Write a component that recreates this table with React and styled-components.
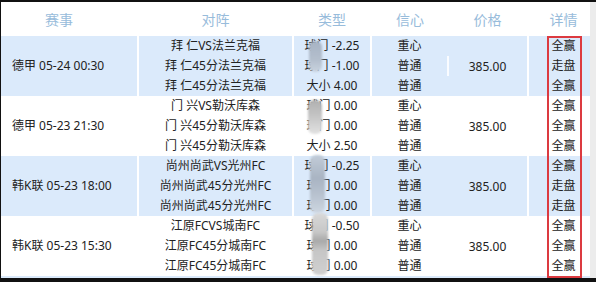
import React from 'react';
import styled, { createGlobalStyle } from 'styled-components';

const GlobalStyle = createGlobalStyle`
  html, body {
    margin: 0;
    padding: 0;
    background: #111;
  }
  body {
    font-family: "Noto Sans", "Noto Sans CJK SC", sans-serif;
    font-size: 12px;
    color: #222;
  }
`;

const Frame = styled.div`
  display: flex;
  width: 596px;
  height: 282px;
  padding: 2px 0 0 1px;
  box-sizing: border-box;
  background: #111;
  overflow: hidden;
`;

const Table = styled.div`
  position: relative;
  width: 589px;
  display: flex;
  flex-direction: column;
  background: #fff;
  align-self: flex-start;
`;

const RightEdge = styled.div`
  flex: 1;
  height: 276px;
  background: #ececec;
`;

const Row = styled.div`
  display: grid;
  grid-template-columns: 136px 153px 76px 155px 1fr;
  column-gap: 2px;
  height: ${p => p.$height}px;
  background: #fff;
`;

const HeadCell = styled.div`
  display: flex;
  align-items: center;
  justify-content: center;
  font-size: 14px;
  color: #98bcdb;
  padding: ${p => p.$pad || '0'};
`;

const Cell = styled.div`
  position: relative;
  display: flex;
  flex-direction: column;
  justify-content: center;
  align-items: ${p => (p.$left ? 'flex-start' : 'center')};
  padding-left: ${p => p.$padLeft || 0}px;
  background: ${p => (p.$alt ? '#dbeafb' : '#fff')};
  line-height: 20px;
  white-space: pre;
`;

const Split = styled.div`
  display: flex;
  background: ${p => (p.$alt ? '#dbeafb' : '#fff')};
`;

const Confidence = styled.div`
  width: 76px;
  display: flex;
  flex-direction: column;
  justify-content: center;
  line-height: 20px;
`;

const ConfLine = styled.div`
  text-align: center;
  border-right: 2px solid ${p => (p.$mark ? 'rgba(255,255,255,0.85)' : 'transparent')};
  margin-right: -1px;
`;

const Price = styled.div`
  flex: 1;
  display: flex;
  align-items: center;
  justify-content: center;
`;

const Smudge = styled.div`
  position: absolute;
  left: ${p => p.$x}px;
  top: ${p => p.$y}px;
  width: ${p => p.$w}px;
  height: ${p => p.$h}px;
  border-radius: 6px;
  background: ${p => p.$bg};
  filter: blur(1.2px);
`;

const Tail = styled.div`
  height: 2px;
  background: #dbeafb;
`;

const RedBox = styled.div`
  position: absolute;
  left: 546px;
  top: 34px;
  width: 31px;
  height: 238px;
  border: 2px solid #dc3a40;
`;

const heads = ['赛事', '对阵', '类型', '信心', '价格', '详情'];

const matches = [
  {
    league: '德甲 05-24 00:30',
    teams: ['拜 仁VS法兰克福', '拜 仁45分法兰克福', '拜 仁45分法兰克福'],
    types: ['球门 -2.25', '球门 -1.00', '大小 4.00'],
    result: ['全赢', '走盘', '全赢'],
    smudge: { x: 15, y: 5, w: 13, h: 31, bg: 'linear-gradient(180deg, #a7b3c4 0%, #b4bfcd 60%, #c9d3df 100%)' },
  },
  {
    league: '德甲 05-23 21:30',
    teams: ['门 兴VS勒沃库森', '门 兴45分勒沃库森', '门 兴45分勒沃库森'],
    types: ['球门 0.00', '球门 0.00', '大小 2.50'],
    result: ['全赢', '全赢', '全赢'],
    smudge: { x: 14, y: 4, w: 14, h: 34, bg: 'linear-gradient(180deg, #b0b0b0 0%, #c4c4c4 45%, #e2e2e2 100%)' },
  },
  {
    league: '韩K联 05-23 18:00',
    teams: ['尚州尚武VS光州FC', '尚州尚武45分光州FC', '尚州尚武45分光州FC'],
    types: ['球门 -0.25', '球门 0.00', '球门 0.00'],
    result: ['全赢', '走盘', '走盘'],
    smudge: { x: 16, y: -1, w: 15, h: 58, bg: 'linear-gradient(180deg, #c2ccd8 0%, #a9b4c3 40%, #b9c3d0 70%, #cdd6e1 100%)' },
  },
  {
    league: '韩K联 05-23 15:30',
    teams: ['江原FCVS城南FC', '江原FC45分城南FC', '江原FC45分城南FC'],
    types: ['球门 -0.50', '球门 0.00', '球门 0.00'],
    result: ['全赢', '全赢', '全赢'],
    smudge: { x: 18, y: -3, w: 16, h: 62, bg: 'linear-gradient(180deg, #d8d8d8 0%, #c8c8c8 30%, #a9a9a9 45%, #c6c6c6 60%, #d0d0d0 100%)' },
  },
];

function Lines({ items }) {
  return items.map((t, i) => <div key={i}>{t}</div>);
}

export default function App() {
  return (
    <>
      <GlobalStyle />
      <Frame>
        <Table>
          <Row $height={34}>
            {heads.map((h, i) =>
              i === 3 ? (
                <Split key={h}>
                  <HeadCell style={{ width: 76 }}>{h}</HeadCell>
                  <HeadCell style={{ flex: 1 }}>{heads[4]}</HeadCell>
                </Split>
              ) : i === 4 ? null : (
                <HeadCell key={h} $pad={i === 0 ? '0 20px 0 0' : i === 5 ? '0 0 0 8px' : '0'}>
                  {h}
                </HeadCell>
              )
            )}
          </Row>
          {matches.map((m, idx) => {
            const alt = idx % 2 === 0;
            return (
              <Row key={m.league} $height={60}>
                <Cell $alt={alt} $left $padLeft={11}>{m.league}</Cell>
                <Cell $alt={alt}>
                  <Lines items={m.teams} />
                </Cell>
                <Cell $alt={alt}>
                  <Lines items={m.types} />
                  <Smudge $x={m.smudge.x} $y={m.smudge.y} $w={m.smudge.w} $h={m.smudge.h} $bg={m.smudge.bg} />
                </Cell>
                <Split $alt={alt}>
                  <Confidence>
                    <ConfLine>重心</ConfLine>
                    <ConfLine $mark={alt && idx === 0}>普通</ConfLine>
                    <ConfLine>普通</ConfLine>
                  </Confidence>
                  <Price>385.00</Price>
                </Split>
                <Cell $alt={alt} style={{ paddingLeft: 8 }}>
                  <Lines items={m.result} />
                </Cell>
              </Row>
            );
          })}
          <Tail />
          <RedBox />
        </Table>
        <RightEdge />
      </Frame>
    </>
  );
}
